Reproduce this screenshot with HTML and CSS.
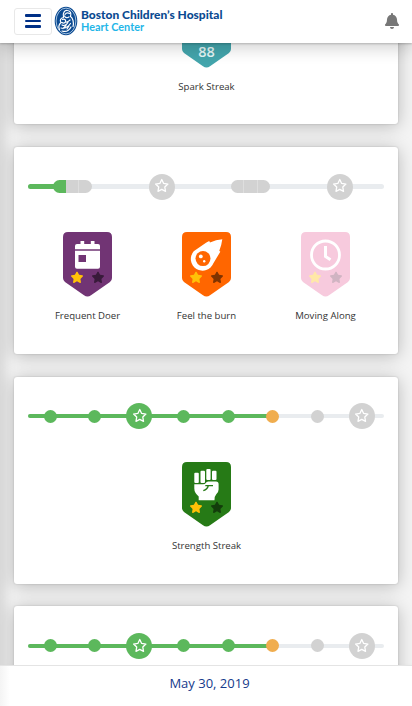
FILE: index.html
```html
<!DOCTYPE html>
<html lang="en">
<head>
<meta charset="utf-8">
<title>Heart Center</title>
<link rel="stylesheet" href="styles.css">
</head>
<body>
<svg class="defs" aria-hidden="true">
  <symbol id="star" viewBox="0 0 576 512"><path d="M259.3 17.8L194 150.2 47.9 171.5c-26.2 3.8-36.7 36.1-17.7 54.6l105.7 103-25 145.5c-4.5 26.3 23.2 46 46.4 33.7L288 439.6l130.7 68.7c23.2 12.2 50.9-7.4 46.4-33.7l-25-145.5 105.7-103c19-18.5 8.5-50.8-17.7-54.6L382 150.2 316.7 17.8c-11.7-23.6-45.6-23.9-57.4 0z"/></symbol>
  <symbol id="star-o" viewBox="0 0 16 16"><path d="M8 1.6l1.95 4 4.4.65-3.2 3.1.75 4.4L8 11.7l-3.9 2.05.75-4.4-3.2-3.1 4.4-.65z" fill="none" stroke="currentColor" stroke-width="1.35" stroke-linejoin="round"/></symbol>
  <symbol id="shield" viewBox="0 0 49 65"><path d="M5 0H44Q49 0 49 5V46Q49 48.500 47 50L28 63.200Q24.500 66 21 63.200L2 50Q0 48.500 0 46V5Q0 0 5 0z"/></symbol>
</svg>
<div class="app">
  <header class="topbar">
    <button class="menu" aria-label="Menu"><span></span><span></span><span></span></button>
    <div class="brand">
      <svg class="seal" viewBox="0 0 24 30">
        <ellipse cx="12" cy="15" rx="11.300" ry="14.300" fill="#0b4a91"/>
        <ellipse cx="12" cy="15" rx="9.900" ry="12.900" fill="none" stroke="#c8dcef" stroke-width=".8"/>
        <g fill="none" stroke="#fff" stroke-linecap="round" stroke-width="1.200">
          <path d="M9.500 11c-1-4 1-7 4-6.500 3 .3 4 3 3 6 2.500 1.500 3.500 6 2.500 10"/>
          <path d="M11 8.500c1-1.500 3-1.800 4.500-1M10.500 10c1 2 3 2.300 4.500.8"/>
          <path d="M9.500 11.500c-3 .5-4 3-2.500 5-2 2-2.500 5-1.500 7M8.500 13.500c2-1 3.500.5 3 2.200-.5 1.500-2.300 1.800-3.500.8"/>
          <path d="M12 16c2 .5 3-1 4-2M8 19c2 1 4.500 0 6-2.500M7 22c4 1 7-1 9.500-4.500M8 25c4 1.300 7 0 9-4M12 19.500l-3 3M15 20l-2 3"/>
        </g>
      </svg>
      <svg class="wordmark" viewBox="0 0 146 26">
        <text class="hospital" x="0" y="11.200" textLength="141.500" lengthAdjust="spacingAndGlyphs">Boston Children’s Hospital</text>
        <text class="center" x="0" y="22.900" textLength="63" lengthAdjust="spacingAndGlyphs">Heart Center</text>
      </svg>
    </div>
    <svg class="bell" viewBox="0 0 448 512"><path d="M224 512c35.320 0 63.970-28.650 63.970-64H160.030c0 35.350 28.650 64 63.970 64zm215.390-149.710c-19.320-20.760-55.470-51.990-55.470-154.290 0-77.700-54.480-139.900-127.940-155.160V32c0-17.670-14.320-32-31.980-32s-31.980 14.330-31.980 32v20.840C118.560 68.100 64.080 130.300 64.080 208c0 102.300-36.150 133.530-55.470 154.290-6 6.450-8.660 14.160-8.610 21.710.11 16.400 12.980 32 32.100 32h383.800c19.120 0 32-15.600 32.100-32 .05-7.550-2.610-15.270-8.610-21.710z"/></svg>
  </header>

  <main class="feed">
    <section class="card">
      <div class="track"></div>
      <div class="badges">
        <figure class="badge teal">
          <svg viewBox="0 0 49 65"><use href="#shield"/><text class="count" x="24.500" y="53.600" text-anchor="middle">88</text></svg>
          <figcaption>Spark Streak</figcaption>
        </figure>
      </div>
    </section>

    <section class="card">
      <div class="track">
        <div class="line"><i class="fill short"></i></div>
        <div class="steps">
          <span><b class="pill"><i class="done"></i><i></i><i></i></b></span>
          <span><b class="goal"><svg><use href="#star-o"/></svg></b></span>
          <span><b class="pill"><i></i><i></i><i></i></b></span>
          <span><b class="goal"><svg><use href="#star-o"/></svg></b></span>
        </div>
      </div>
      <div class="badges">
        <figure class="badge purple">
          <svg viewBox="0 0 49 65"><use href="#shield"/>
            <path fill="#fff" d="M12 17.300V14q0-2 2-2h3.500V9h3.700v3h6.600V9h3.700v3H35q2 0 2 2v3.300zM12 18.700H37V34.700q0 2-2 2H14q-2 0-2-2z"/><path d="M15.500 23h7.500v7h-7.500z"/>
            <use href="#star" class="gold" x="7.500" y="39.500" width="13" height="11.500"/><use href="#star" class="dim" x="28.500" y="39.500" width="13" height="11.500"/></svg>
          <figcaption>Frequent Doer</figcaption>
        </figure>
        <figure class="badge orange">
          <svg viewBox="0 0 49 65"><use href="#shield"/>
            <path fill="#fff" d="M40.300 7.200Q39.600 13 37.300 18.800l1 .9-6.900 11.600A11.700 11.700 0 1 1 11.700 19.300L24 10.700l3.200-1.600.8 1.400Q34 7.800 40.300 7.200z"/>
            <circle cx="21" cy="26.600" r="7.500"/><circle cx="18.800" cy="24.400" r="1.900" fill="#fff"/><circle cx="22.200" cy="29.200" r="1.200" fill="#fff"/>
            <use href="#star" class="gold" x="7.500" y="39.500" width="13" height="11.500"/><use href="#star" class="dim" x="28.500" y="39.500" width="13" height="11.500"/></svg>
          <figcaption>Feel the burn</figcaption>
        </figure>
        <figure class="badge pink">
          <svg viewBox="0 0 49 65"><use href="#shield"/>
            <circle cx="24.500" cy="23" r="14" fill="none" stroke="#fff" stroke-width="2.800"/><path d="M24.500 14v10.500l5 3.300" fill="none" stroke="#fff" stroke-width="3"/>
            <use href="#star" class="gold" x="7.500" y="39.500" width="13" height="11.500"/><use href="#star" class="dim" x="28.500" y="39.500" width="13" height="11.500"/></svg>
          <figcaption>Moving Along</figcaption>
        </figure>
      </div>
    </section>

    <section class="card">
      <div class="track">
        <div class="line"><i class="fill long"></i></div>
        <div class="steps">
          <span><b class="dot done"></b></span><span><b class="dot done"></b></span>
          <span><b class="goal done"><svg><use href="#star-o"/></svg></b></span>
          <span><b class="dot done"></b></span><span><b class="dot done"></b></span>
          <span><b class="dot today"></b></span><span><b class="dot"></b></span>
          <span><b class="goal"><svg><use href="#star-o"/></svg></b></span>
        </div>
      </div>
      <div class="badges">
        <figure class="badge green">
          <svg viewBox="0 0 49 65"><use href="#shield"/>
            <g fill="#fff"><rect x="12.300" y="10.800" width="4.500" height="10.300" rx="1"/><rect x="18.500" y="8.800" width="4.500" height="12.300" rx="1"/><rect x="24.300" y="7" width="4.300" height="11" rx="1"/><rect x="30" y="8.800" width="4.500" height="9.200" rx="1"/>
            <path d="M12.300 22.300H21q2.300 0 2.800-1.400.6-1.500 2.400-1.500H34q2.600 0 2.600 2.600v5.500q0 2.800-2.500 5-1.600 1.500-1.600 5.800H16.700v-3.800q-4.400-3.800-4.400-8z"/></g>
            <path d="M31 23.600h-4.700q-.8 3.800-5 5M26.300 23.600h-3" fill="none" stroke="#267a16" stroke-width="1.400"/>
            <use href="#star" class="gold" x="7.500" y="39.500" width="13" height="11.500"/><use href="#star" class="dim" x="28.500" y="39.500" width="13" height="11.500"/></svg>
          <figcaption>Strength Streak</figcaption>
        </figure>
      </div>
    </section>

    <section class="card">
      <div class="track">
        <div class="line"><i class="fill long"></i></div>
        <div class="steps">
          <span><b class="dot done"></b></span><span><b class="dot done"></b></span>
          <span><b class="goal done"><svg><use href="#star-o"/></svg></b></span>
          <span><b class="dot done"></b></span><span><b class="dot done"></b></span>
          <span><b class="dot today"></b></span><span><b class="dot"></b></span>
          <span><b class="goal"><svg><use href="#star-o"/></svg></b></span>
        </div>
      </div>
    </section>
  </main>

  <footer class="datebar">May 30, 2019</footer>
</div>
</body>
</html>
```
FILE: styles.css
```css
* { box-sizing: border-box; }
body { margin: 0; font-family: "Open Sans", sans-serif; }
.defs { display: none; }
.app { height: 706px; display: flex; flex-direction: column; overflow: hidden; background: #f4f4f4; }

.topbar { flex: none; height: 43px; display: flex; align-items: center; padding: 0 13px 1px 14px; background: #fff; box-shadow: 0 1px 2px rgba(0,0,0,.2), 0 4px 18px rgba(0,0,0,.2); z-index: 2; }
.menu { width: 38px; height: 27px; padding: 0; display: flex; flex-direction: column; justify-content: center; align-items: center; gap: 3px; border: 1px solid #e8e8e8; border-radius: 3px; background: #fff; }
.menu span { width: 16px; height: 2.400px; border-radius: 1px; background: #003087; }
.brand { display: flex; align-items: center; margin-left: 2px; }
.seal { width: 24px; height: 30px; }
.wordmark { width: 146px; height: 26px; margin-left: 3px; overflow: visible; }
.wordmark text { font-family: Lato, sans-serif; }
.hospital { font-size: 11.500px; font-weight: 900; fill: #0b4a91; }
.center { font-size: 11px; font-weight: 700; fill: #1fb6e8; }
.bell { width: 14px; height: 16px; margin-left: auto; fill: #777; }

.feed { flex: 1; min-height: 0; overflow: hidden; display: flex; flex-direction: column; gap: 22.600px; padding: 0 14px; box-shadow: inset 14px 0 14px -10px rgba(0,0,0,.14); }
.card { flex: none; height: 207px; padding: 26.600px 14px 0; border-radius: 3px; background: #fff; box-shadow: 0 0 2px rgba(0,0,0,.2), 0 2px 18px rgba(0,0,0,.25); }
.card:first-child { margin-top: -125.600px; }

.track { display: grid; align-items: center; height: 26px; }
.line, .steps { grid-area: 1 / 1; }
.line { height: 4.500px; border-radius: 3px; background: #e9ecef; overflow: hidden; }
.fill { display: block; height: 100%; background: #5cb85c; }
.short { width: 12%; }
.long { width: 68%; }
.steps { display: flex; z-index: 1; }
.steps > span { flex: 1; display: flex; justify-content: center; align-items: center; }
.dot { width: 13px; height: 13px; border-radius: 50%; background: #d2d2d2; }
.goal { width: 26px; height: 26px; border-radius: 50%; display: flex; align-items: center; justify-content: center; background: #d2d2d2; color: #fff; }
.goal svg { width: 15.500px; height: 15.500px; margin-top: -1px; }
.pill { display: flex; height: 13px; width: 39px; border-radius: 7px; overflow: hidden; }
.pill i { flex: 1; background: #d2d2d2; }
.pill i + i { border-left: 1px solid #dedede; }
.pill .done + i { border-left: 0; }
.dot.done, .goal.done, .pill .done { background: #5cb85c; }
.dot.today { background: #f0ad4e; }

.badges { display: flex; margin: 32.600px -1px 0 0; }
.badge { flex: 1; margin: 0; display: flex; flex-direction: column; align-items: center; fill: currentColor; }
.badge > svg { width: 49px; height: 65px; }
.badge figcaption { margin-top: 11px; font-size: 9.600px; line-height: 15px; color: #333; }
.count { font-size: 14.500px; font-weight: 600; fill: #e4f5f5; }
.gold { fill: #ffc107; }
.dim { fill: #000; fill-opacity: .5; }
.teal { color: #43a5ac; }
.purple { color: #713474; }
.orange { color: #ff6600; }
.green { color: #267a16; }
.pink { color: #f7cadd; }
.pink .gold { fill: #ffe8a8; }
.pink .dim { fill: #d0b4c2; fill-opacity: 1; }

.datebar { flex: none; height: 41px; z-index: 2; border-top: 1px solid #e4e4e4; background: linear-gradient(90deg, #f4f4f4, #fff 10px); text-align: center; font-size: 13px; line-height: 35px; color: #153a8b; padding-left: 7px; }
```
